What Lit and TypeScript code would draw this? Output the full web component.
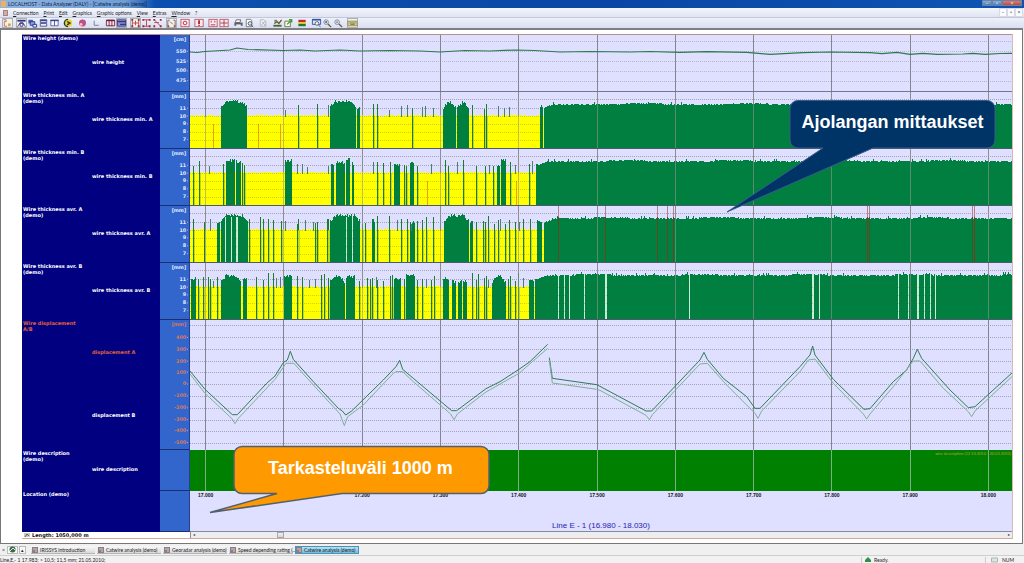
import { LitElement, html, svg, css, SVGTemplateResult, TemplateResult } from "lit";
import { customElement } from "lit/decorators.js";
import { classMap } from "lit/directives/class-map.js";

type Span = [number, number, number];

interface Thickness {
  title: string;
  label: string;
  start: number;
  level: number;
  blocks: Span[];
  lines: number[];
  stubs: number[];
  red: number[];
  brown: number[];
  white: number[];
}

const WIDTH = 822;

// Repeatable noise between 0 and 1
const noise = (n: number): number => {
  const v = Math.sin(n * 127.1 + 11.7) * 43758.5453;
  return v - Math.floor(v);
};

const THICKNESS: Thickness[] = [
  {
    title: "Wire thickness min. A", label: "wire thickness min. A", start: 354, level: 12,
    blocks: [[31, 57, 8], [140, 166, 8], [167, 170, 14], [253, 266, 9], [267, 279, 9], [350, 353, 13]],
    lines: [108, 127, 183, 187, 222, 282, 294, 296],
    stubs: [15, 95, 138, 199, 211, 217, 232, 235, 243, 308, 314, 319],
    red: [23, 68, 90], brown: [], white: [],
  },
  {
    title: "Wire thickness min. B", label: "wire thickness min. B", start: 346, level: 12,
    blocks: [[36, 45, 10], [46, 51, 11], [95, 102, 10], [141, 144, 14], [146, 155, 12], [156, 160, 9], [162, 164, 13],
      [204, 210, 14], [220, 224, 12], [307, 310, 15], [311, 316, 9]],
    lines: [3, 9, 33, 52, 54, 187, 193, 200, 214, 216, 227, 255, 258, 273, 286, 295, 303, 320, 339],
    stubs: [19, 107, 112, 117, 138, 183, 241, 267, 299, 325, 342],
    red: [237, 326], brown: [], white: [],
  },
  {
    title: "Wire thickness avr. A", label: "wire thickness avr. A", start: 354, level: 12,
    blocks: [[27, 30, 16], [31, 58, 8], [140, 170, 8], [182, 185, 13], [220, 225, 15], [254, 279, 8], [280, 283, 15], [347, 352, 14]],
    lines: [3, 14, 59, 70, 73, 78, 83, 91, 107, 108, 125, 127, 137, 138, 172, 175, 187, 199, 211, 217, 227, 232, 236, 243, 286,
      293, 295, 298, 304, 308, 315, 319, 325, 333, 340],
    stubs: [20, 95, 115, 123, 207, 221, 250, 310, 329],
    red: [], brown: [368, 415, 467, 477, 483, 677, 679, 782, 784], white: [35, 41, 46, 47, 156, 162],
  },
  {
    title: "Wire thickness avr. B", label: "wire thickness avr. B", start: 345, level: 12,
    blocks: [[1, 6, 14], [31, 51, 11], [53, 57, 14], [94, 102, 11], [140, 155, 12], [156, 165, 12], [204, 211, 14], [216, 225, 11],
      [253, 259, 14], [262, 266, 17], [268, 272, 17], [273, 277, 17], [302, 316, 12], [339, 344, 16]],
    lines: [8, 13, 18, 20, 27, 66, 73, 78, 83, 107, 112, 131, 134, 138, 169, 177, 180, 182, 187, 193, 200, 202, 214, 227, 232, 241,
      244, 282, 286, 288, 294, 296, 318, 320, 325, 328],
    stubs: [23, 86, 90, 119, 125, 172, 186, 236, 298, 333],
    red: [], brown: [],
    white: [368, 374, 379, 394, 415, 416, 499, 622, 623, 629, 708, 718, 727, 728, 734, 740, 745],
  },
];

const MENUS = ["Connection", "Print", "Edit", "Graphics", "Graphic options", "View", "Extras", "Window", "?"];

const TABS = ["IRISSYS introduction", "Catwire analysis (demo)", "Georadar analysis (demo)", "Speed depending rating (...", "Catwire analysis (demo)"];

const rulers = (height: number, color = "#85858f"): SVGTemplateResult =>
  svg`${Array.from({ length: 11 }, (_, k) => svg`<rect x=${Math.round(15 + k * 78.3)} y="0" width="1" height=${height} fill=${color}/>`)}`;

const dotted = (ys: number[], color = "#a3a3b4"): SVGTemplateResult =>
  svg`${ys.map((y) => svg`<line x1="0" x2=${WIDTH} y1=${y + 0.5} y2=${y + 0.5} stroke=${color} stroke-width="1" stroke-dasharray="1 1"/>`)}`;

const redFrame = svg`<rect x="0.5" y="0.5" width="9" height="8" fill="#fbe9ec" stroke="#bf5a70"/>`;
const profile = (d: string): SVGTemplateResult => svg`<path d=${d} fill="none" stroke="#b8434f"/><path d="M1 1h2M8 1h2M1 8h2M8 8h2" stroke="#a02838" stroke-width="2"/>`;
const lens = (sign: string): SVGTemplateResult =>
  svg`<circle cx="4" cy="3.5" r="2.5" fill="#eef3fb" stroke="#7b8494"/><path d="M6 5.5 9.5 9" stroke="#6b5a48" stroke-width="1.5"/><path d=${sign} stroke="#445"/>`;

interface Tool { name: string; gap?: boolean; pressed?: boolean; art: SVGTemplateResult }

const TOOLS: Tool[] = [
  { name: "Connect", pressed: true, art: svg`<path d="M1 1h3v2h-2v5h3" fill="none" stroke="#c0695a"/><path d="M6 5h3v3h-3z" fill="#d9a441"/>` },
  { name: "Diagram", gap: true, pressed: true, art: svg`<path d="M1 1h9v2h-9z" fill="#33338c"/><path d="M1 9 4 4h3l3 5M3 6h5" fill="none" stroke="#50508f"/><path d="M4 5h3v3h-3z" fill="#fff" stroke="#33338c"/>` },
  { name: "Cascade", art: svg`<path d="M1 1h5v4h-5z" fill="#4a5cb0"/><path d="M3 3h5v4h-5z" fill="#8ba0dd" stroke="#27378a"/><path d="M6 6h4v3h-4z" fill="#dfe5fa" stroke="#27378a"/>` },
  { name: "Tile horizontally", art: svg`<path d="M2 1h7v3h-7zM2 5h7v3h-7z" fill="#e9ecfb" stroke="#4a5290"/><path d="M2 1h7v1.5h-7z" fill="#3a4590"/>` },
  { name: "Tile vertically", art: svg`<path d="M1.5 1.5h4v6h-4zM5.500 1.500h4v6h-4z" fill="#f7f8fe" stroke="#5b6299"/><path d="M1 1h9v1.500h-9z" fill="#3a4590"/>` },
  { name: "Refresh", gap: true, art: svg`<circle cx="5.500" cy="4.500" r="4" fill="#e8d23a"/><path d="M5 0.500a4 4 0 0 0 0 8M4 3l3 1.500-3 2" fill="none" stroke="#2c3a22" stroke-width="1.500"/>` },
  { name: "Colours", gap: true, art: svg`<circle cx="5.500" cy="4.500" r="3.800" fill="#d84a68"/><path d="M5 1a4 4 0 0 1 4 4l-4-1z" fill="#8a62c0"/><circle cx="4" cy="6" r="1.500" fill="#f4c2c8"/>` },
  { name: "Axes", gap: true, art: svg`<path d="M3 2v5h5" fill="none" stroke="#777d8c"/>` },
  { name: "Columns", gap: true, art: svg`<path d="M1 1.500h9v6h-9zM4 1v7M7 1v7" fill="#f6e3e8" stroke="#7c2540"/><path d="M1 1h9v1.500h-9z" fill="#6a1b3a"/>` },
  { name: "Rows", pressed: true, art: svg`<path d="M1 1h9v7h-9z" fill="#8d8fd0" stroke="#34377f"/><path d="M1 3h9M4 6h6" stroke="#34377f" stroke-width="1.500"/>` },
  { name: "Profile 1", gap: true, pressed: true, art: profile("M2 1v7M9 1v7M2 4.500h7M5.500 2v5") },
  { name: "Profile 2", art: profile("M2 1h7M2 8h7M5.500 1v7") },
  { name: "Profile 3", art: profile("M2 1 9 8M2 4h5") },
  { name: "Split", gap: true, pressed: true, art: svg`<path d="M1.500 8V1.500h2M9.500 8V1.500h-2M4 3l3 3" fill="none" stroke="#75656d"/><path d="M1 7h2v2h-2zM8 7h2v2h-2z" fill="#a24a52"/>` },
  { name: "Section", gap: true, art: svg`${redFrame}<circle cx="5" cy="4.500" r="2" fill="none" stroke="#a8324c"/>` },
  { name: "Marker", gap: true, art: svg`${redFrame}<path d="M5 1.500v4M5 6.500v1" stroke="#b51f36" stroke-width="2"/>` },
  { name: "Range", gap: true, art: svg`${redFrame}<path d="M2.500 6.500h5M3 2v2M7 2v2" stroke="#a8324c"/>` },
  { name: "Grid", art: svg`${redFrame}<path d="M5 1v7M1 4.500h8" stroke="#a8324c"/>` },
  { name: "Print", gap: true, art: svg`<path d="M3 1h5l-1 3h-5z" fill="#fff" stroke="#666"/><path d="M1 4h9v3.500h-9z" fill="#5d6068"/><path d="M3 6h5v2h-5z" fill="#e9e9e9"/>` },
  { name: "Print preview", art: svg`<path d="M2 0.500h5l1 1.500v6.500h-6z" fill="#fff" stroke="#777"/><circle cx="6" cy="5" r="2" fill="#dfeaf7" stroke="#4c5565"/><path d="M7.500 6.500 9.500 9" stroke="#4c5565"/>` },
  { name: "Copy", gap: true, art: svg`<path d="M2 1h4l2 2v5h-6z" fill="#f3f3f6" stroke="#b2b5c0"/><path d="M3 7 8 2M4 3l4 5" stroke="#a6aab8"/>` },
  { name: "Edit", gap: true, art: svg`<path d="M1 7.500h9" stroke="#3c6d3c" stroke-width="2"/><path d="M2 5 5 3l2 2 3-4" fill="none" stroke="#754c31" stroke-width="1.500"/><path d="M2 1h3v2h-3z" fill="#6f8c3e"/>` },
  { name: "Export", art: svg`<path d="M1.500 2.500h6v6h-6z" fill="#fdfdf2" stroke="#5b7d3c"/><path d="M4 6 8 2M6 1h3v3" fill="none" stroke="#4e9a3a" stroke-width="1.500"/>` },
  { name: "Legend", gap: true, art: svg`<path d="M1 1h8v2.500h-8z" fill="#c62828"/><path d="M1 3.500h8v2h-8z" fill="#e5c72a"/><path d="M1 5.500h8v2.500h-8z" fill="#1d7a2f"/>` },
  { name: "Zoom window", gap: true, art: svg`<path d="M1 0.500h9v5.500h-9z" fill="#dbe6fa" stroke="#31519c"/><path d="M1 1h9" stroke="#31519c" stroke-width="1.500"/><circle cx="6" cy="5" r="2" fill="#f3f7ff" stroke="#5a5f78"/><path d="M7.500 6.500 10 9" stroke="#5a5f78"/>` },
  { name: "Zoom in", art: lens("M3 3.500h2M4 2.500v2") },
  { name: "Zoom out", art: lens("M3 3.500h2") },
  { name: "Keyboard", gap: true, pressed: true, art: svg`<path d="M0.500 2.500h10v5h-10z" fill="#dedb9b" stroke="#8b8a4e"/><path d="M2 4.500h7M3 6h5" stroke="#77763c"/>` },
];

@customElement("tool-bar")
export class ToolBar extends LitElement {
  static styles = css`
    :host { display: flex; align-items: center; height: 11px; padding-left: 2px; box-sizing: border-box;
      background: linear-gradient(#eef0fb, #dadff0); border-top: 1px solid #c3c8d8; }
    .tool { width: 11px; height: 10px; padding: 0; margin: 0; border: 0; background: none; display: block; }
    .gap { margin-left: 3px; }
    .pressed { background: #f4f1e6; box-shadow: inset 0 0 0 1px #aeb0b8; }
    .art { display: block; width: 11px; height: 10px; }
  `;
  render() {
    return html`${TOOLS.map((t) => html`
      <button class=${classMap({ tool: true, gap: !!t.gap, pressed: !!t.pressed })} aria-label=${t.name}>
        <svg class="art" viewBox="-0.5 -0.5 12 10">${t.art}</svg>
      </button>`)}`;
  }
}

@customElement("data-chart")
export class DataChart extends LitElement {
  static styles = css`
    :host { display: flex; flex-direction: column; position: relative; min-height: 0; box-shadow: 1px 0 0 #d9b9b0;
      border-top: 1px solid #b98f86; font: bold 5px/6px "DejaVu Sans", sans-serif; color: #fff; }
    .rows { flex: 1; min-height: 0; display: grid; grid-template-rows: repeat(5, minmax(0, 57fr)) minmax(0, 130fr) minmax(0, 41fr) minmax(0, 41fr); }
    .row { display: grid; grid-template-columns: 70px 68px 30px minmax(0, 1fr); min-height: 0; background: #000080; }
    .title { white-space: pre-line; padding-left: 1px; }
    .subs { display: flex; flex-direction: column; justify-content: space-around; white-space: nowrap; padding-bottom: 3px; }
    .scale { display: block; width: 30px; height: 100%; background: #3366cc; box-sizing: border-box; border-bottom: 1px solid #1c2f74; border-right: 1px solid #26408f; }
    .scale text { fill: #e4ecff; text-anchor: end; }
    .alt { color: #e0603a; }
    .alt text { fill: #d9775e; }
    .plot { display: block; width: 100%; height: 100%; min-height: 0; background: #dfdfff; overflow: hidden; }
    .bare { background: none; }
    .desc { background: #008000; position: relative; min-height: 0; }
    .note { position: absolute; top: 1px; right: 1px; font: 4px/5px "Lato", sans-serif; color: #b9a03c; }
    .place { display: flex; flex-direction: column; justify-content: space-between; background: #dfdfff; overflow: hidden;
      box-sizing: border-box; border-bottom: 1px solid #8a8a98; font-family: "Liberation Sans", sans-serif; }
    .axis { display: grid; grid-template-columns: repeat(11, 1fr); width: 104.76%; margin-left: -2.86%; text-align: center; color: #15151c; padding-top: 1px; }
    .line-name { text-align: center; font-weight: normal; font-size: 8px; line-height: 9px; padding-bottom: 1px; color: #2424b4; }
    .foot { height: 7px; display: grid; grid-template-columns: 168px minmax(0, 1fr); background: #fff; color: #111; border-bottom: 1px solid #d5a79c; box-sizing: border-box; }
    .length { display: flex; align-items: center; gap: 2px; padding-left: 2px; }
    .scroll { display: grid; grid-template-columns: 6px 30fr 7px 270fr 6px; background: #ededf0; border-left: 1px solid #8a8a98; align-items: center; }
    .scroll button { grid-row: 1; padding: 0; border: 0; background: none; height: 6px; font: 4px/6px "DejaVu Sans", sans-serif; color: #333; }
    .scroll .thumb { grid-column: 3; background: linear-gradient(#f8f8f8, #cfd0d6); box-shadow: inset 0 0 0 1px #a6a8b0; }
    .scroll .end { grid-column: 5; }
    .layer { position: absolute; top: 0; bottom: 7px; left: 168px; right: 0; pointer-events: none; }
    .callout { position: absolute; font: bold 18px/45px "Liberation Sans", sans-serif; text-align: center; box-sizing: border-box; isolation: isolate; }
    .callout svg { position: absolute; overflow: visible; left: 0; top: 0; width: 100%; height: 100%; z-index: -1; }
    .blue { left: 73%; top: 13%; width: 205px; height: 49px; }
    .orange { left: 5.4%; top: 82.7%; width: 256px; height: 48px; padding-right: 4px; }
  `;

  private scale(height: number, unit: string, marks: [number, string][], alt = false): TemplateResult {
    return html`<svg class=${classMap({ scale: true, alt })} viewBox="0 0 30 ${height}" preserveAspectRatio="none">
      <text x="27" y="6">${unit}</text>
      ${marks.map(([y, t]) => svg`<text x="27" y=${y + 2}>${t}</text><rect x="28" y=${y} width="1" height="1" fill="#9db4ea"/>`)}
    </svg>`;
  }

  private row(title: string, subs: TemplateResult, scale: TemplateResult, plot: TemplateResult, alt = false): TemplateResult {
    return html`<section class="row">
      <div class=${classMap({ title: true, alt })}>${title}</div>
      <div class="subs">${subs}</div>${scale}${plot}
    </section>`;
  }

  private thickness(t: Thickness, index: number): TemplateResult {
    const seed = index * 977;
    const base: SVGTemplateResult[] = [];
    // Yellow fill with a ragged upper edge
    let edge = "M0 56";
    for (let x = 0; x < t.start; x++) {
      const y = 23 + Math.round(noise(seed + x * 0.37) * 1.4 - 0.4) + (noise(x + seed) > 0.94 ? 1 : 0);
      edge += `V${y}H${x + 1}`;
    }
    base.push(svg`<path d=${edge + "V56Z"} fill="#ffff00"/>`);
    let green = "";
    for (const [a, b, top] of t.blocks) {
      for (let x = a; x < b; x++) {
        const side = b - a > 10 ? Math.max(0, 5 - Math.min(x - a, b - 1 - x)) : 0;
        green += `M${x} 56V${Math.round(top + side + noise(seed + x) * 3)}h1V56Z`;
      }
    }
    for (let x = t.start; x < WIDTH; x++) {
      const ramp = Math.max(0, 4 - (x - t.start) / 3);
      const swell = Math.sin(x / 17 + index) > 0.5 ? -1 : 0;
      const spike = noise(x * 1.7 + seed) > 0.95 ? -2 : 0;
      green += `M${x} 56V${Math.round(t.level + ramp + swell + spike + noise(seed + x) * 0.8)}h1V56Z`;
    }
    const narrow = t.lines.map((x) => `M${x} 56V${Math.round(10 + noise(x + seed) * 8)}h1V56Z`).join("");
    const stubs = t.stubs.map((x) => `M${x} 25V${Math.round(12 + noise(x + seed) * 6)}h1V25Z`).join("");
    return html`<svg class="plot" viewBox="0 0 822 57" preserveAspectRatio="none" shape-rendering="crispEdges">
      ${dotted([7, 16])}${rulers(57)}${base}
      <path d=${green} fill="#008040"/>
      <path d=${narrow} fill="#1b7d2c"/>
      ${t.lines.map((x) => svg`<rect x=${x + 1} y="24" width="1" height="32" fill="#c3d81a"/>`)}
      <path d=${stubs} fill="#4a8070"/>
      ${t.red.map((x) => svg`<rect x=${x} y="32" width="1" height="24" fill="#f0a000"/>`)}
      ${t.white.map((x) => svg`<rect x=${x} y="11" width="1" height="45" fill="#c8ecd8"/>`)}
      ${t.brown.map((x) => svg`<rect x=${x} y="0" width="1" height="11" fill="#b8808c"/><rect x=${x} y="11" width="1" height="45" fill="#5e4a22"/>`)}
      <g opacity="0.25">${dotted([24, 32, 40, 48], "#505020")}</g>
      <g opacity="0.6">${rulers(57, "#95958f")}</g>
      <rect x="0" y="56" width="822" height="1" fill="#4c5a6c"/>
    </svg>`;
  }

  private heightPlot(): TemplateResult {
    return html`<svg class="plot" viewBox="0 0 822 57" preserveAspectRatio="none">
      <g shape-rendering="crispEdges">${dotted([6, 16, 26, 36, 46], "#b7b7cb")}${rulers(57)}<rect x="0" y="56" width="822" height="1" fill="#77778a"/></g>
      <polyline fill="none" stroke="#2c7a4a" stroke-width="1.2" points="0,17 7,17.500 15,16.500 40,15 47,13 58,14.500 93,15.500 110,15 125,16 150,15 170,16 200,15.500 230,16 250,17 275,15.500 300,16 325,15 345,15.500 370,17 400,16.500 440,17 460,16.500 490,17.300 517,16.600 557,17.300 580,19.300 613,17.600 640,17 680,17.600 692,18.600 707,17.300 720,19.300 733,18.300 747,19.300 773,19 783,18.300 795,19.300 810,18.500 822,18.300"/>
    </svg>`;
  }

  private displacementPlot(): TemplateResult {
    return html`<svg class="plot" viewBox="0 0 822 130" preserveAspectRatio="none">
      <g shape-rendering="crispEdges">${dotted([5, 17, 29, 41, 52, 64, 76, 88, 100, 111, 123])}${rulers(130)}</g>
      <g fill="none" transform="scale(0.33333)">
        <g transform="translate(-30 -30)">
          <path stroke="#2f7a55" stroke-width="3" d="M30 183 75 238 157 314H172L260 220 285 198 310 158 322 150 331 124 340 148 400 215 475 295 487 303 497 315 515 303 610 210 648 170 659 151 668 178 700 205 815 302H830L918 236 960 215 1017 178 1050 155 1103 103M1108 143 1117 205 1250 224 1260 229"/>
          <path stroke="#7fae98" stroke-width="3" d="M30 192 75 250 155 325 165 341 175 325 285 208 318 160H342L370 192 480 312 493 347 503 320 550 285 640 190 648 185H668L700 215 812 312 822 329 832 312 918 246 1017 190 1103 115M1108 150 1117 219 1250 238 1260 241"/>
        </g>
        <g transform="translate(1230 -30)">
          <path stroke="#2f7a55" stroke-width="3" d="M0 229 138 303H155L300 150 312 127 322 148 370 205 440 260 465 295H480L600 170 630 135 638 108 645 135 700 208 792 298 810 296 880 215 920 180 940 145 952 118 965 145 1050 240 1105 293 1125 290 1238 187"/>
          <path stroke="#7fae98" stroke-width="3" d="M0 241 138 316 148 329 158 313 300 162 322 160 380 225 465 310 474 325 485 303 600 185 625 150 645 147 700 220 790 312 800 327 810 312 880 230 930 165 940 153H960L1030 235 1105 305 1115 320 1125 303 1238 198"/>
        </g>
      </g>
    </svg>`;
  }

  render() {
    const mm: [number, string][] = [[16, "11"], [24, "10"], [32, "9"], [40, "8"], [48, "7"]];
    const ys = [17, 29, 41, 52, 64, 76, 88, 100, 111, 123];
    const steps = ys.map((y, i): [number, string] => [y, String(400 - i * 100)]);
    return html`
      <div class="rows">
        ${this.row("Wire height (demo)", html`<span>wire height</span>`,
          this.scale(57, "[cm]", [[16, "550"], [26, "525"], [36, "500"], [46, "475"]]), this.heightPlot())}
        ${THICKNESS.map((t, i) => this.row(`${t.title}\n(demo)`, html`<span>${t.label}</span>`, this.scale(57, "[mm]", mm), this.thickness(t, i)))}
        ${this.row("Wire displacement\nA/B", html`<span class="alt">displacement A</span><span>displacement B</span>`,
          this.scale(130, "[mm]", steps, true), this.displacementPlot(), true)}
        ${this.row("Wire description\n(demo)", html`<span>wire description</span>`, this.scale(41, "", []),
          html`<div class="desc"><svg class="plot bare" viewBox="0 0 822 41" preserveAspectRatio="none" shape-rendering="crispEdges">${rulers(41, "#7fae86")}</svg>
            <span class="note">wire description (12.10.2010 - 30.03.2010)</span></div>`)}
        ${this.row("Location (demo)", html``, this.scale(41, "", []),
          html`<div class="place"><div class="axis">${Array.from({ length: 11 }, (_, k) => html`<span>${(17 + k / 10).toFixed(3)}</span>`)}</div>
            <div class="line-name">Line E - 1 (16.980 - 18.030)</div></div>`)}
      </div>
      <div class="foot">
        <div class="length"><svg width="6" height="6" viewBox="0 0 6 6"><path d="M0 1h6v4H0z" fill="#c9cdb8"/><path d="M1 5 3 2l2 2" fill="none" stroke="#566"/></svg><span>Length: 1050,000 m</span></div>
        <div class="scroll"><button aria-label="Scroll left">◂</button><button class="thumb" aria-label="Position"></button><button class="end" aria-label="Scroll right">▸</button></div>
      </div>
      <div class="layer">
        <div class="callout blue"><svg viewBox="0 0 205 49"><path d="M8 0.500H197a8 8 0 0 1 8 8V40a8 8 0 0 1-8 8H83L-63 112 33 48H8a8 8 0 0 1-8-8V8.500a8 8 0 0 1 8-8Z" fill="#003366" stroke="#385d8a"/></svg>Ajolangan mittaukset</div>
        <div class="callout orange"><svg viewBox="0 0 256 48"><path d="M8 0.500H247a8 8 0 0 1 8 8V39.500a8 8 0 0 1-8 8H108L-24 66.500 43 47.500H8a8 8 0 0 1-8-8V8.500a8 8 0 0 1 8-8Z" fill="#ff9900" stroke="#51606e" stroke-width="1.500"/></svg>Tarkasteluväli 1000 m</div>
      </div>`;
  }
}

@customElement("app-root")
export class AppRoot extends LitElement {
  static styles = css`
    :host { display: flex; flex-direction: column; height: 100vh; min-height: 480px; background: #f0f0f0; overflow: hidden;
      font: 5px/6px "Lato", "Liberation Sans", sans-serif; color: #222; }
    button { font: inherit; color: inherit; border: 0; padding: 0; margin: 0; background: none; }
    .titlebar { height: 8px; display: flex; align-items: center; gap: 2px; padding-left: 1px; color: #0b1c3c;
      background: linear-gradient(90deg, #8fb3de 0, #6f9dd6 125px, #0c4fae 155px, #0a47a4 60%, #0e53b4); }
    .logo { width: 5px; height: 6px; background: #f0b060; }
    .caption { flex: 1; white-space: nowrap; }
    .win { display: flex; align-self: flex-start; margin-right: 2px; }
    .win button { width: 10px; height: 6px; background: linear-gradient(#9db9dc, #4671ac); color: #fff; font-size: 5px; line-height: 6px; box-shadow: inset 0 0 0 1px #6483ad; }
    .win .close { width: 20px; background: linear-gradient(#e08b7c, #c33a26); }
    .menubar { height: 9px; display: flex; align-items: center; gap: 5px; padding: 0 2px 0 3px; background: linear-gradient(#f4f6fc, #dfe4f3); }
    .menubar svg { display: block; width: 5px; height: 6px; }
    .menubar .key::first-letter { text-decoration: underline; }
    .fill { flex: 1; }
    .mdi { display: flex; gap: 2px; }
    .mdi button { width: 6px; height: 7px; background: #fafbfe; line-height: 7px; box-shadow: 0 0 0 1px #d7dbe6; }
    .work { flex: 1; min-height: 0; display: flex; flex-direction: column; background: #fff; border: 1px solid #777; border-top: 2px solid #7f7f84;
      padding: 4px 10px 4px 21px; margin-right: 1px; box-sizing: border-box; }
    .work data-chart { flex: 1; }
    .taskbar { height: 12px; display: flex; align-items: center; gap: 2px; padding-left: 1px; box-sizing: border-box; border-bottom: 1px solid #cfcfcf; }
    .nav { display: flex; align-items: center; gap: 1px; margin-right: 3px; }
    .nav button { height: 8px; width: 7px; background: #f8f8f8; box-shadow: inset 0 0 0 1px #bbb; line-height: 8px; }
    .nav .bare { width: 5px; box-shadow: none; background: none; }
    .nav .home { width: 11px; display: flex; justify-content: center; align-items: center; }
    .tab { width: 64px; height: 8px; display: flex; align-items: center; gap: 2px; padding-left: 1px; white-space: nowrap;
      background: linear-gradient(#f9f9f9, #d6d6d8); box-shadow: inset 0 -1px 0 #b5b5b8; }
    .tab svg { flex: none; width: 6px; height: 6px; }
    .on { background: linear-gradient(#c3e8f8, #63b6dd); box-shadow: inset 0 0 0 1px #4a94ba; }
    .status { height: 7px; display: flex; align-items: center; white-space: nowrap; background: #f2f2f2; }
    .status .grow { flex: 1; }
    .ready { display: flex; align-items: center; gap: 3px; width: 124px; border-left: 1px solid #ccc; padding-left: 3px; box-sizing: border-box; }
    .pad { width: 16px; border-left: 1px solid #ccc; display: flex; justify-content: center; }
    .num { width: 22px; }
  `;

  render() {
    const tabIcon = html`<svg viewBox="0 0 6 6"><path d="M0 0h6v6H0z" fill="#8a7f86"/><path d="M1 2h2M3 4h2M4 1v2" stroke="#e3c9c9"/></svg>`;
    return html`
      <header class="titlebar">
        <span class="logo"></span>
        <span class="caption">LOCALHOST - Data Analyzer (DALY) - [Catwire analysis (demo)]</span>
        <span class="win"><button aria-label="Minimize">–</button><button aria-label="Restore">▫</button><button class="close" aria-label="Close">×</button></span>
      </header>
      <nav class="menubar">
        <svg viewBox="0 0 5 6"><path d="M0 0h5v6H0z" fill="#a9817e"/><path d="M1 2h3M1 4h3" stroke="#ecd9d4"/></svg>
        ${MENUS.map((m) => html`<button class="key">${m}</button>`)}
        <span class="fill"></span>
        <span class="mdi"><button aria-label="Minimize document">-</button><button aria-label="Restore document">▫</button><button aria-label="Close document">×</button></span>
      </nav>
      <tool-bar></tool-bar>
      <main class="work"><data-chart></data-chart></main>
      <nav class="taskbar">
        <span class="nav"><button class="bare" aria-label="Close bar">×</button>
          <button class="home" aria-label="Desktop"><svg width="7" height="7" viewBox="0 0 7 7"><circle cx="3.500" cy="3.500" r="3" fill="#3b6b46"/><path d="M1 5 4 2l2 2" stroke="#dfe9dd" fill="none"/></svg></button>
          <button aria-label="More">▴</button></span>
        ${TABS.map((t, i) => html`<button class=${classMap({ tab: true, on: i === 4 })}>${tabIcon}<span>${t}</span></button>`)}
      </nav>
      <footer class="status">
        <span>Line,E,- 1 17.983; &gt; 10,5; 11,5 mm; 21.05.2010;</span><span class="grow"></span>
        <span class="ready"><svg width="6" height="6" viewBox="0 0 6 6"><path d="M3 0 6 3v2H0V3z" fill="#2f8f4e"/></svg>Ready.</span>
        <span class="pad"><svg width="7" height="6" viewBox="0 0 7 6"><path d="M0.500 1h6v4h-6z" fill="#dde6e6" stroke="#a9b5b5"/></svg></span>
        <span class="num">NUM</span>
      </footer>`;
  }
}
